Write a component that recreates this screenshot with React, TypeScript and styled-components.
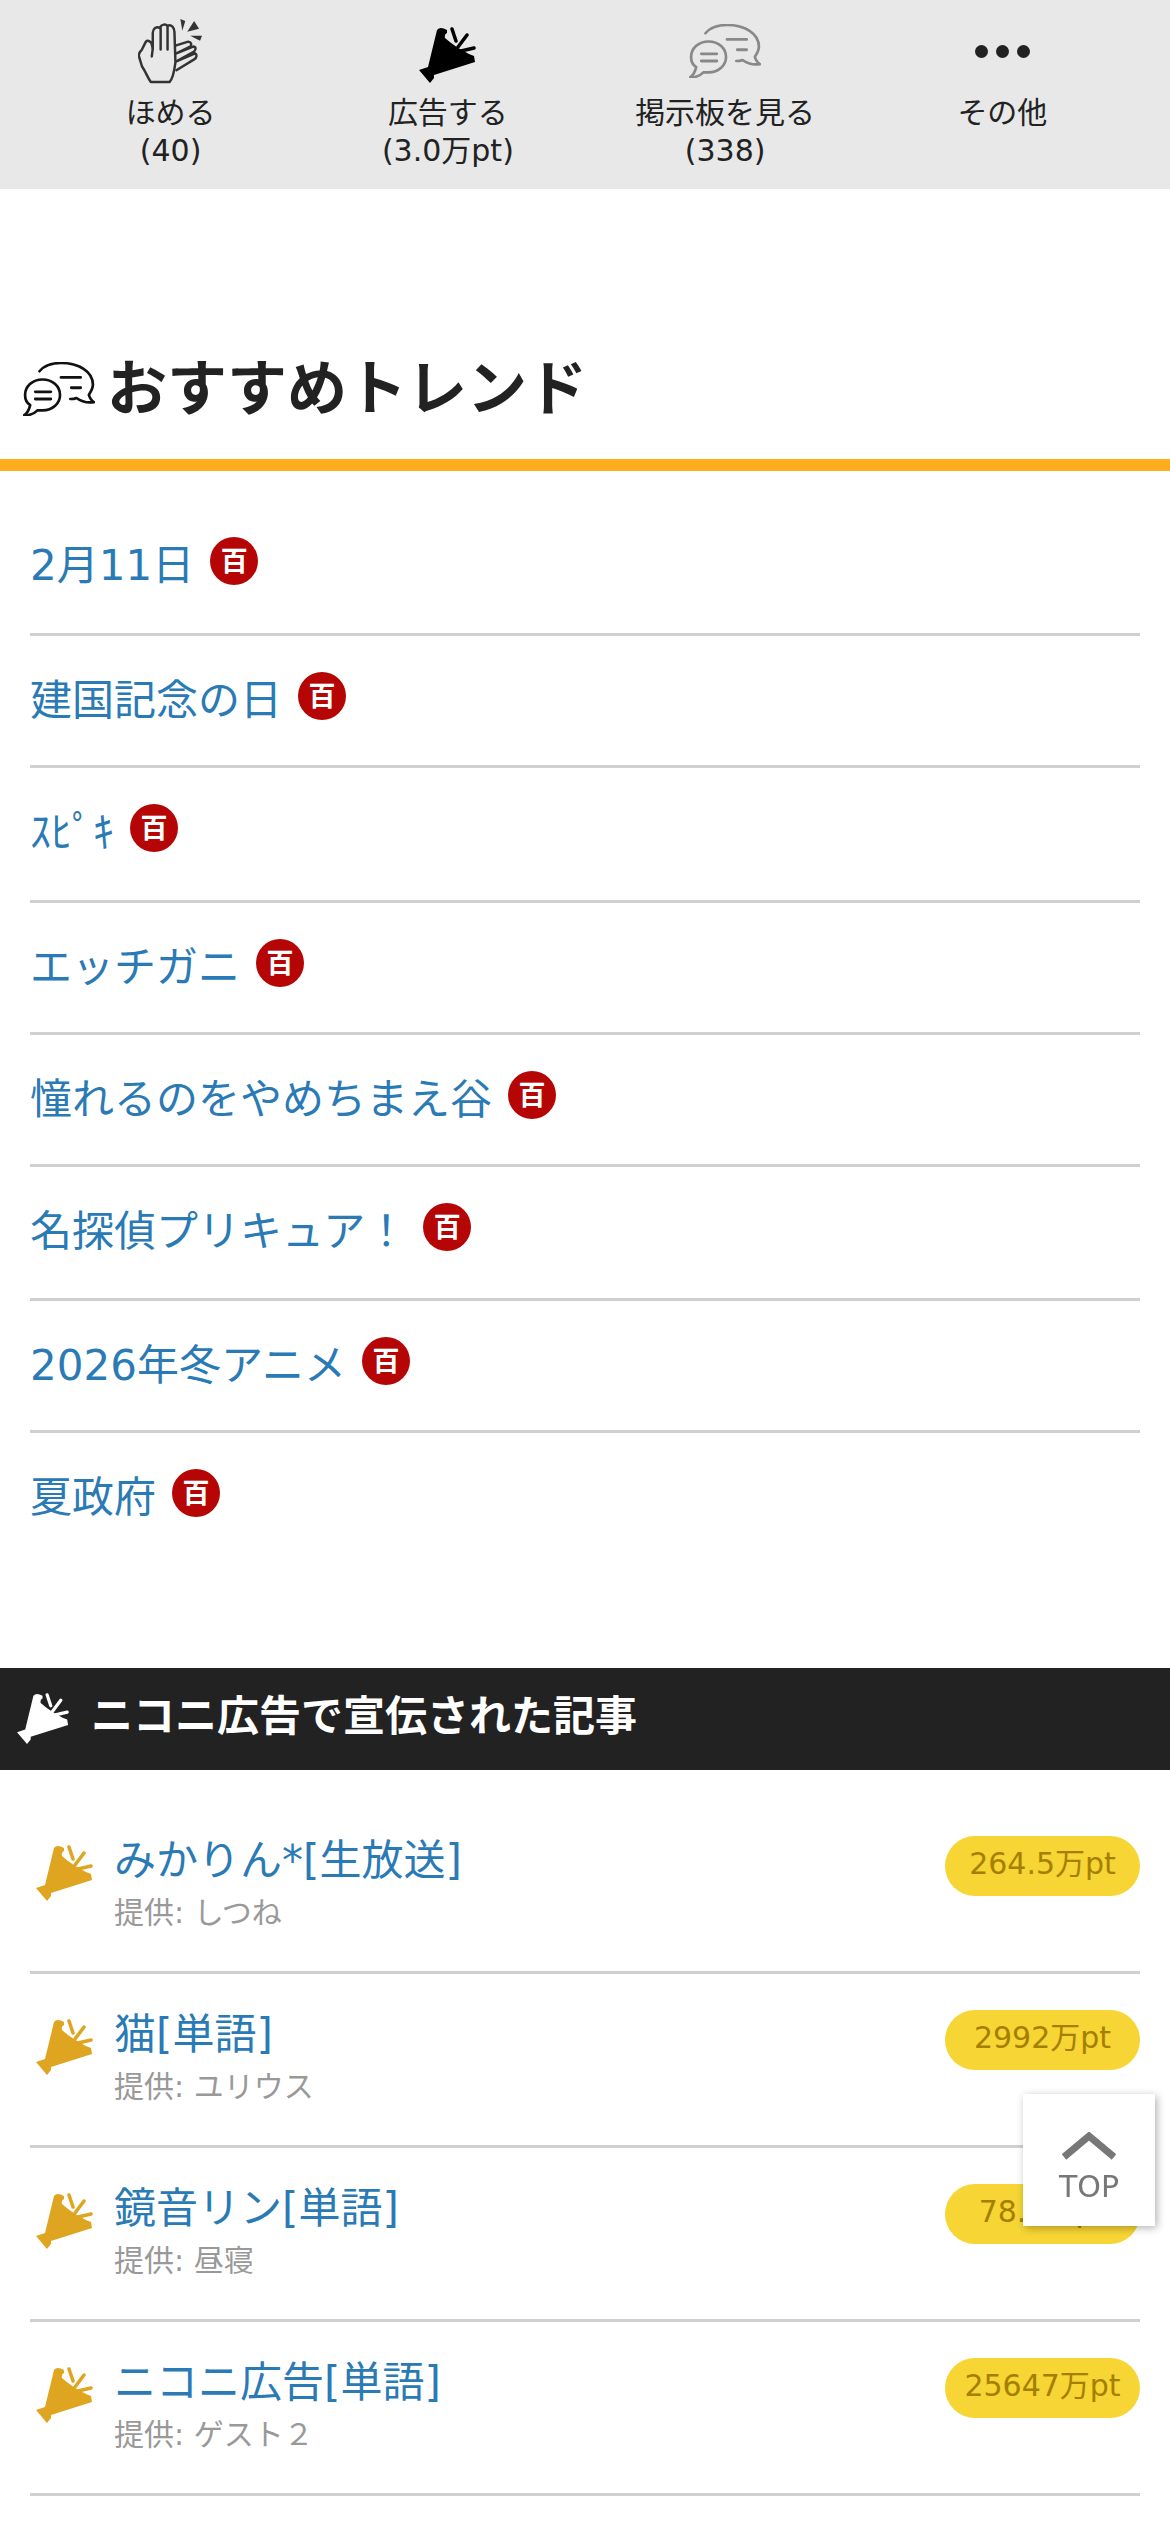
import styled, { createGlobalStyle } from "styled-components";

const GlobalStyle = createGlobalStyle`
  html, body {
    margin: 0;
    padding: 0;
    background: #fff;
  }
  body {
    font-family: "DejaVu Sans", "Noto Sans CJK JP", sans-serif;
    color: #222;
  }
`;

type IconProps = { color?: string; width?: number };

const ClapIcon = () => (
  <svg width="65" height="66" viewBox="10 9 66 67" fill="none" stroke="#333" strokeWidth="2.5" strokeLinecap="round" strokeLinejoin="round">
    <path d="M23 74 C20 70 18 64 14 58 L11 48 C10 45 12 43 14 41 L18 33 C20 31 24 33 24 36 L25 40 V24 C25 20 29 17 32 19 C34 15 38 15 40 17 C44 15 47 19 47 23 L48 54 C47 62 46 70 42 74 Z" />
    <path d="M33 19 V41 M40 17 V41 M25 40 L24 48" />
    <path d="M48 37 L61 33 C64 33 65 36 63 38 L49 45 L66 38 C69 38 69 41 67 43 L49 53 L68 45 C70 46 70 49 67 51 L49 62" />
    <path d="M53 10 L58 12 L55 22 Z M67 12 L72 20 L60 23 Z M75 27 L73 32 L63 27 Z" fill="#333" stroke="none" />
  </svg>
);

const HornIcon = ({ color = "#000", width = 57 }: IconProps) => (
  <svg width={width} height={width} viewBox="7 7 57 57" fill={color}>
    <path d="M25 10 Q28 6 35 10 L35 13 Q32 14 33 18 Q43 27 57 34 L62 36 L63 42 L22 55 L22 58 L18 63 L7 50 L16 47 Z" />
    <path d="M40 9 L44 21 M55 15 L46 27 M62 28 L49 31" stroke={color} strokeWidth="3.5" strokeLinecap="round" fill="none" />
  </svg>
);

const BubbleIcon = ({ color = "#888", width = 72 }: IconProps) => (
  <svg width={width} height={(width * 53) / 70} viewBox="6 6 70 53" fill="none" stroke={color} strokeWidth="2.6" strokeLinecap="round" strokeLinejoin="round">
    <path d="M22 15 C27 9 35 7 43 7 C60 7 74 15 74 28 C74 32 72 35 70 38 C71 41 73 44 75 45 C68 46 62 44 58 41 C56 42 54 42 52 42" />
    <path d="M25 23 C15 23 8 30 8 38 C8 42 10 46 13 48 C12 52 10 56 7 58 C12 58 17 56 20 53 C22 53 23 53 25 53 C35 53 42 46 42 38 C42 30 35 23 25 23 Z" />
    <path d="M18 35 H33 M18 42 H33" strokeWidth="2.8" />
    <path d="M43 21 H62 M53 31 H62" strokeWidth="2.8" />
  </svg>
);

const ChevronIcon = () => (
  <svg width="54" height="28" viewBox="0 0 54 28" fill="none" stroke="#777" strokeWidth="7">
    <path d="M2 25 L27 4 L52 25" />
  </svg>
);

function MoreDots() {
  return (
    <DotRow>
      <Dot />
      <Dot />
      <Dot />
    </DotRow>
  );
}

const actions = [
  { icon: <ClapIcon />, label: "ほめる", sub: "(40)", bottom: true },
  { icon: <HornIcon />, label: "広告する", sub: "(3.0万pt)", bottom: true },
  { icon: <BubbleIcon />, label: "掲示板を見る", sub: "(338)", bottom: false },
  { icon: <MoreDots />, label: "その他", sub: "", bottom: false },
];

const trends = [
  { name: "2月11日", height: 135 },
  { name: "建国記念の日", height: 132 },
  { name: "ｽﾋﾟｷ", height: 135 },
  { name: "エッチガニ", height: 132 },
  { name: "憧れるのをやめちまえ谷", height: 132 },
  { name: "名探偵プリキュア！", height: 134 },
  { name: "2026年冬アニメ", height: 132 },
  { name: "夏政府", height: 130 },
];

const ads = [
  { title: "みかりん*[生放送]", by: "しつね", pt: "264.5万pt" },
  { title: "猫[単語]", by: "ユリウス", pt: "2992万pt" },
  { title: "鏡音リン[単語]", by: "昼寝", pt: "78.4万pt" },
  { title: "ニコニ広告[単語]", by: "ゲスト２", pt: "25647万pt" },
];

const App = () => {
  return (
    <>
      <GlobalStyle />
      <ActionBar>
        {actions.map((a) => (
          <Action key={a.label}>
            <ActionIcon $bottom={a.bottom}>{a.icon}</ActionIcon>
            <ActionLabel>{a.label}</ActionLabel>
            {a.sub && <ActionLabel>{a.sub}</ActionLabel>}
          </Action>
        ))}
      </ActionBar>

      <TrendHeading>
        <BubbleIcon color="#111" width={72} />
        <span>おすすめトレンド</span>
      </TrendHeading>
      <TrendList>
        {trends.map((t) => (
          <TrendRow key={t.name} $height={t.height}>
            <RowLink>{t.name}</RowLink>
            <DicBadge>百</DicBadge>
          </TrendRow>
        ))}
      </TrendList>

      <AdHeading>
        <HornIcon color="#fff" width={52} />
        <AdHeadingText>ニコニ広告で宣伝された記事</AdHeadingText>
      </AdHeading>
      <AdList>
        {ads.map((ad) => (
          <AdRow key={ad.title}>
            <AdIcon>
              <HornIcon color="#dfa520" width={57} />
            </AdIcon>
            <AdBody>
              <RowLink>{ad.title}</RowLink>
              <AdBy>提供: {ad.by}</AdBy>
            </AdBody>
            <PointPill>{ad.pt}</PointPill>
          </AdRow>
        ))}
      </AdList>

      <TopButton>
        <ChevronIcon />
        <TopLabel>TOP</TopLabel>
      </TopButton>
    </>
  );
};

const ActionBar = styled.div`
  display: grid;
  grid-template-columns: repeat(4, 1fr);
  height: 189px;
  padding: 0 29px 0 32px;
  background: #e8e8e8;
  box-sizing: border-box;
`;

const Action = styled.div`
  display: flex;
  flex-direction: column;
  align-items: center;
  padding-top: 18px;
`;

const ActionIcon = styled.div<{ $bottom: boolean }>`
  display: flex;
  align-items: ${(p) => (p.$bottom ? "flex-end" : "center")};
  justify-content: center;
  height: 66px;
  margin-bottom: 10px;
`;

const ActionLabel = styled.div`
  font-size: 30px;
  line-height: 38px;
  color: #222;
`;

const DotRow = styled.div`
  display: flex;
  gap: 8px;
`;

const Dot = styled.span`
  width: 13px;
  height: 13px;
  border-radius: 50%;
  background: #222;
`;

const TrendHeading = styled.h2`
  display: flex;
  align-items: center;
  gap: 12px;
  margin: 159px 0 0;
  padding: 0 0 29px 23px;
  height: 82px;
  font-size: 60px;
  line-height: 82px;
  font-weight: 700;
  color: #222;
  border-bottom: 12px solid #ffad1c;
`;

const TrendList = styled.ul`
  list-style: none;
  margin: 0 30px;
  padding: 30px 0 0;
`;

const TrendRow = styled.li<{ $height: number }>`
  display: flex;
  align-items: flex-start;
  gap: 16px;
  height: ${(p) => p.$height}px;
  padding-top: 37px;
  box-sizing: border-box;
  border-bottom: 3px solid #d0d0d0;

  &:last-child {
    border-bottom: none;
  }
`;

const RowLink = styled.a`
  font-size: 42px;
  line-height: 56px;
  color: #2a7ab5;
`;

const DicBadge = styled.span`
  display: flex;
  align-items: center;
  justify-content: center;
  width: 48px;
  height: 48px;
  margin-top: -1px;
  border-radius: 50%;
  background: #b50505;
  color: #fff;
  font-size: 27px;
  font-weight: 700;
  line-height: 1;
`;

const AdHeading = styled.h3`
  display: flex;
  align-items: center;
  gap: 22px;
  margin: 105px 0 0;
  padding-left: 17px;
  height: 102px;
  background: #222;
  color: #fff;
  font-size: 42px;
  font-weight: 700;
`;

const AdHeadingText = styled.span`
  margin-bottom: 14px;
`;

const AdList = styled.ul`
  list-style: none;
  margin: 0 30px;
  padding: 30px 0 0;
`;

const AdRow = styled.li`
  display: flex;
  align-items: flex-start;
  height: 174px;
  box-sizing: border-box;
  border-bottom: 3px solid #d0d0d0;
`;

const AdIcon = styled.div`
  width: 84px;
  padding: 45px 0 0 6px;
  box-sizing: border-box;
`;

const AdBody = styled.div`
  flex: 1;
  display: flex;
  flex-direction: column;
  padding-top: 33px;
`;

const AdBy = styled.div`
  margin-top: 4px;
  font-size: 30px;
  line-height: 40px;
  color: #999;
`;

const PointPill = styled.div`
  display: flex;
  align-items: center;
  justify-content: center;
  width: 195px;
  height: 60px;
  margin-top: 36px;
  padding-bottom: 11px;
  box-sizing: border-box;
  border-radius: 30px;
  background: #f6d534;
  color: #a58000;
  font-size: 30px;
  white-space: nowrap;
`;

const TopButton = styled.div`
  position: fixed;
  left: 1023px;
  top: 2094px;
  width: 132px;
  height: 132px;
  display: flex;
  flex-direction: column;
  align-items: center;
  padding-top: 38px;
  box-sizing: border-box;
  background: #fff;
  box-shadow: 2px 2px 8px rgba(0, 0, 0, 0.3);
`;

const TopLabel = styled.div`
  margin-top: 9px;
  font-size: 30px;
  line-height: 36px;
  color: #777;
`;

export default App;
